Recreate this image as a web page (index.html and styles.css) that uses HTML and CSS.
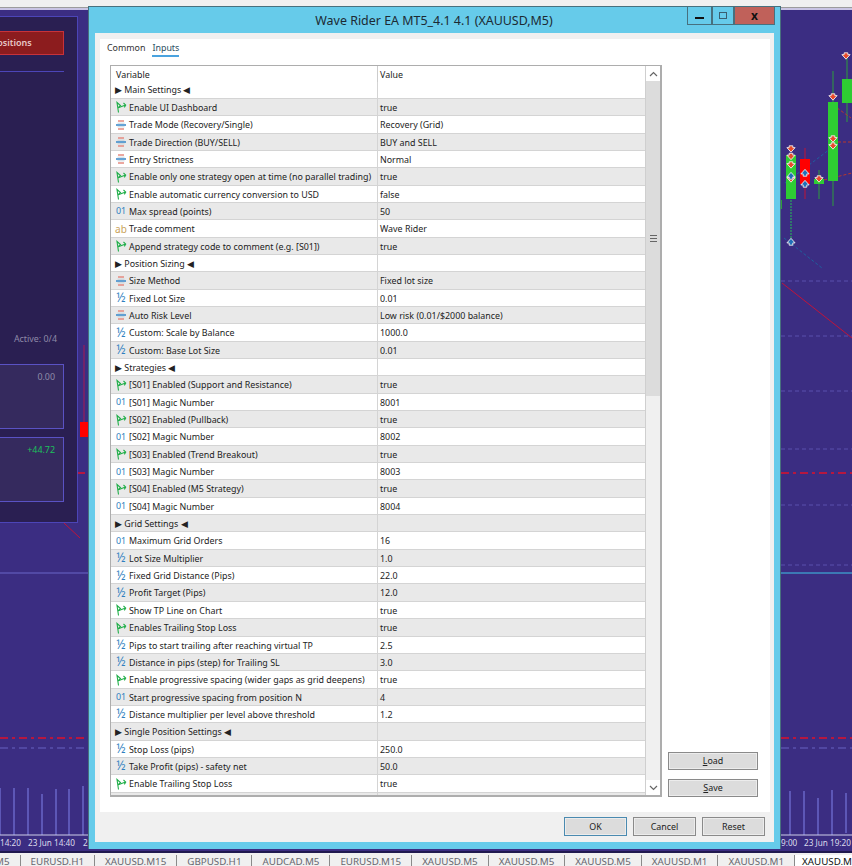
FILE: index.html
```html
<!DOCTYPE html>
<html lang="en">
  <head>
    <meta charset="UTF-8" />
    <meta name="viewport" content="width=device-width, initial-scale=1.0" />
    <title>Wave Rider EA MT5_4.1 4.1 (XAUUSD,M5)</title>
    <link rel="stylesheet" href="styles.css">
  </head>
  <body>
    <div class="hidden">
      <svg width="0" height="0" class="hidden">
        <symbol id="bool" viewBox="0 0 12 12" fill="none" stroke="#1fae48" stroke-width="1.100">
          <path d="M3.500 11.500L2 1.500l3.500 3L2.600 7.500"></path>
          <path d="M4 6.500l6.500-2.500M8.500 2l2.200 2-1.400 2.400"></path>
        </symbol>
        <symbol id="enum" viewBox="0 0 12 12" fill="none" stroke-width="1.600">
          <path d="M3 2h6M3 10h6" stroke="#e58a80"></path>
          <path d="M1 6h10" stroke="#3f8ccb"></path>
          <path d="M2.500 4.200h7M2.500 7.800h7" stroke="#b9c9d6" stroke-width=".8"></path>
        </symbol>
        <symbol id="sell" viewBox="0 0 11 11" stroke="#f4eeee" stroke-width="1" fill="#e8492a" overflow="visible">
          <path d="M3.500 2h4v2h2.500L5.500 9 1 4h2.500z"></path>
        </symbol>
        <symbol id="buy" viewBox="0 0 11 11" stroke="#f4eeee" stroke-width="1" fill="#1f6fb8" overflow="visible">
          <path d="M5.500 1.500L10 6.500H7.500V9h-4V6.500H1z"></path>
        </symbol>
      </svg>
    </div>

    <div class="topbar"></div>

    <main class="chart">
      <svg class="chart-draw" viewBox="0 0 852 845" width="852" height="845">
        <g stroke="#5a50ad" stroke-dasharray="4 3" fill="none">
          <path d="M781 273h71M781 328h71M781 383h71M781 441h71M781 497h71M781 557h71"></path>
        </g>
        <path d="M781 565h71" stroke="#3fc5e6"></path>
        <path d="M0 565h88" stroke="#6a66c8"></path>
        <g stroke="#e0102a" stroke-width="1.500" stroke-dasharray="8 4 3 4" fill="none">
          <path d="M781 465h71M0 730h85M781 730h71"></path>
        </g>
        <g stroke="#5a50ad" stroke-width="1.500" stroke-dasharray="8 4 3 4" fill="none">
          <path d="M0 740h85M781 740h71"></path>
        </g>
        <path d="M782 275L852 330" stroke="#c0143a" fill="none"></path>
        <path d="M64 515L80 530" stroke="#c0143a" fill="none"></path>
        <path d="M84 337v77" stroke="#a81a52"></path>
        <rect x="80" y="414" width="8" height="15" fill="#ff0000"></rect>
        <path d="M78 465h7" stroke="#e0102a" stroke-width="1.500"></path>

        <path d="M791 192v42" stroke="#2e8f64" stroke-dasharray="2 1" stroke-width="1.500"></path>
        <path d="M805 140v51" stroke="#c01436"></path>
        <path d="M819 162v29M833 63v135M847 47v67M781.500 192v9" stroke="#2f9e3c"></path>
        <path d="M784 230l38 30" stroke="#1f5f9e" stroke-dasharray="3 2" fill="none"></path>
        <path d="M785 175l40-30 8-7" stroke="#1f5f9e" stroke-dasharray="3 2" fill="none"></path>
        <path d="M833 97l18 13M838 134h14M824 172l28-7" stroke="#b8382c" stroke-dasharray="3 2" fill="none"></path>
        <rect x="786" y="147" width="10" height="44" fill="#2ecc33"></rect>
        <rect x="800" y="151" width="10" height="25" fill="#ff0000"></rect>
        <rect x="814" y="171" width="10" height="5" fill="#2ecc33"></rect>
        <rect x="828" y="94" width="10" height="79" fill="#2ecc33"></rect>
        <rect x="842" y="71" width="10" height="24" fill="#2ecc33"></rect>

        <use href="#sell" x="786" y="136" width="10" height="10"></use>
        <use href="#sell" x="786" y="143.500" width="10" height="10"></use>
        <use href="#sell" x="786" y="152" width="10" height="10"></use>
        <use href="#sell" x="786" y="166" width="10" height="10"></use>
        <use href="#buy" x="786" y="163" width="10" height="10"></use>
        <use href="#buy" x="786" y="229" width="10" height="10"></use>
        <use href="#sell" x="814" y="166" width="10" height="10"></use>
        <use href="#sell" x="828" y="84" width="10" height="10"></use>
        <use href="#sell" x="828" y="126" width="10" height="10"></use>
        <use href="#sell" x="828" y="133" width="10" height="10"></use>
        <use href="#sell" x="841" y="43" width="10" height="10"></use>
        <use href="#buy" x="800" y="160" width="10" height="10"></use>
        <use href="#buy" x="800" y="171" width="10" height="10"></use>

        <g stroke="#6a66c8" stroke-width="1.500">
          <path d="M0 780v47M14 780v47M28 780v47M42 786v41M56 781v46M69 781v46M83 778v49"></path>
          <path d="M790 783v44M804 783v44M818 790v37M832 782v45M846 785v40"></path>
        </g>
        <path d="M0 827h88M781 827h71" stroke="#cfcfe8"></path>
        <g class="axis-text">
          <text x="0" y="838">14:20</text>
          <text x="28" y="838">23 Jun 14:40</text>
          <text x="83" y="838">2</text>
          <text x="781" y="838">9:00</text>
          <text x="804" y="838">23 Jun 19:20</text>
        </g>
      </svg>

      <aside class="dash">
        <div class="dash-btn">Close All Positions</div>
        <div class="dash-rule"></div>
        <div class="dash-active">Active: 0/4</div>
        <div class="dash-card">0.00</div>
        <div class="dash-card dash-card-pos">+44.72</div>
      </aside>

      <section class="dialog">
        <header class="titlebar">
          <h1 class="title">Wave Rider EA MT5_4.1 4.1 (XAUUSD,M5)</h1>
          <div class="winbtns">
            <div class="winbtn"><span class="glyph-min"></span></div>
            <div class="winbtn winbtn-max"><span class="glyph-max"></span></div>
            <div class="winbtn winbtn-close">x</div>
          </div>
        </header>
        <div class="client">
          <div class="panel">
            <nav class="tabs">
              <span class="tab">Common</span>
              <span class="tab tab-on">Inputs</span>
            </nav>
            <div class="panel-body">
              <div class="table">
                <div class="table-main">
                  <div class="thead"><span>Variable</span><span>Value</span></div>
                  <div class="rows">
                    <div class="row"><span class="cell section">▶ Main Settings ◀</span><span class="val"></span></div>
                    <div class="row"><span class="cell"><svg class="icon"><use href="#bool"></use></svg>Enable UI Dashboard</span><span class="val">true</span></div>
                    <div class="row"><span class="cell"><svg class="icon"><use href="#enum"></use></svg>Trade Mode (Recovery/Single)</span><span class="val">Recovery (Grid)</span></div>
                    <div class="row"><span class="cell"><svg class="icon"><use href="#enum"></use></svg>Trade Direction (BUY/SELL)</span><span class="val">BUY and SELL</span></div>
                    <div class="row"><span class="cell"><svg class="icon"><use href="#enum"></use></svg>Entry Strictness</span><span class="val">Normal</span></div>
                    <div class="row"><span class="cell"><svg class="icon"><use href="#bool"></use></svg>Enable only one strategy open at time (no parallel trading)</span><span class="val">true</span></div>
                    <div class="row"><span class="cell"><svg class="icon"><use href="#bool"></use></svg>Enable automatic currency conversion to USD</span><span class="val">false</span></div>
                    <div class="row"><span class="cell"><i class="ico ico-int">01</i>Max spread (points)</span><span class="val">50</span></div>
                    <div class="row"><span class="cell"><i class="ico ico-str">ab</i>Trade comment</span><span class="val">Wave Rider</span></div>
                    <div class="row"><span class="cell"><svg class="icon"><use href="#bool"></use></svg>Append strategy code to comment (e.g. [S01])</span><span class="val">true</span></div>
                    <div class="row"><span class="cell section">▶ Position Sizing ◀</span><span class="val"></span></div>
                    <div class="row"><span class="cell"><svg class="icon"><use href="#enum"></use></svg>Size Method</span><span class="val">Fixed lot size</span></div>
                    <div class="row"><span class="cell"><i class="ico ico-dbl">½</i>Fixed Lot Size</span><span class="val">0.01</span></div>
                    <div class="row"><span class="cell"><svg class="icon"><use href="#enum"></use></svg>Auto Risk Level</span><span class="val">Low risk (0.01/$2000 balance)</span></div>
                    <div class="row"><span class="cell"><i class="ico ico-dbl">½</i>Custom: Scale by Balance</span><span class="val">1000.0</span></div>
                    <div class="row"><span class="cell"><i class="ico ico-dbl">½</i>Custom: Base Lot Size</span><span class="val">0.01</span></div>
                    <div class="row"><span class="cell section">▶ Strategies ◀</span><span class="val"></span></div>
                    <div class="row"><span class="cell"><svg class="icon"><use href="#bool"></use></svg>[S01] Enabled (Support and Resistance)</span><span class="val">true</span></div>
                    <div class="row"><span class="cell"><i class="ico ico-int">01</i>[S01] Magic Number</span><span class="val">8001</span></div>
                    <div class="row"><span class="cell"><svg class="icon"><use href="#bool"></use></svg>[S02] Enabled (Pullback)</span><span class="val">true</span></div>
                    <div class="row"><span class="cell"><i class="ico ico-int">01</i>[S02] Magic Number</span><span class="val">8002</span></div>
                    <div class="row"><span class="cell"><svg class="icon"><use href="#bool"></use></svg>[S03] Enabled (Trend Breakout)</span><span class="val">true</span></div>
                    <div class="row"><span class="cell"><i class="ico ico-int">01</i>[S03] Magic Number</span><span class="val">8003</span></div>
                    <div class="row"><span class="cell"><svg class="icon"><use href="#bool"></use></svg>[S04] Enabled (M5 Strategy)</span><span class="val">true</span></div>
                    <div class="row"><span class="cell"><i class="ico ico-int">01</i>[S04] Magic Number</span><span class="val">8004</span></div>
                    <div class="row"><span class="cell section">▶ Grid Settings ◀</span><span class="val"></span></div>
                    <div class="row"><span class="cell"><i class="ico ico-int">01</i>Maximum Grid Orders</span><span class="val">16</span></div>
                    <div class="row"><span class="cell"><i class="ico ico-dbl">½</i>Lot Size Multiplier</span><span class="val">1.0</span></div>
                    <div class="row"><span class="cell"><i class="ico ico-dbl">½</i>Fixed Grid Distance (Pips)</span><span class="val">22.0</span></div>
                    <div class="row"><span class="cell"><i class="ico ico-dbl">½</i>Profit Target (Pips)</span><span class="val">12.0</span></div>
                    <div class="row"><span class="cell"><svg class="icon"><use href="#bool"></use></svg>Show TP Line on Chart</span><span class="val">true</span></div>
                    <div class="row"><span class="cell"><svg class="icon"><use href="#bool"></use></svg>Enables Trailing Stop Loss</span><span class="val">true</span></div>
                    <div class="row"><span class="cell"><i class="ico ico-dbl">½</i>Pips to start trailing after reaching virtual TP</span><span class="val">2.5</span></div>
                    <div class="row"><span class="cell"><i class="ico ico-dbl">½</i>Distance in pips (step) for Trailing SL</span><span class="val">3.0</span></div>
                    <div class="row"><span class="cell"><svg class="icon"><use href="#bool"></use></svg>Enable progressive spacing (wider gaps as grid deepens)</span><span class="val">true</span></div>
                    <div class="row"><span class="cell"><i class="ico ico-int">01</i>Start progressive spacing from position N</span><span class="val">4</span></div>
                    <div class="row"><span class="cell"><i class="ico ico-dbl">½</i>Distance multiplier per level above threshold</span><span class="val">1.2</span></div>
                    <div class="row"><span class="cell section">▶ Single Position Settings ◀</span><span class="val"></span></div>
                    <div class="row"><span class="cell"><i class="ico ico-dbl">½</i>Stop Loss (pips)</span><span class="val">250.0</span></div>
                    <div class="row"><span class="cell"><i class="ico ico-dbl">½</i>Take Profit (pips) - safety net</span><span class="val">50.0</span></div>
                    <div class="row"><span class="cell"><svg class="icon"><use href="#bool"></use></svg>Enable Trailing Stop Loss</span><span class="val">true</span></div>
                    <div class="row"><span class="cell"></span><span class="val"></span></div>
                  </div>
                </div>
                <div class="scrollbar">
                  <div class="sb-btn">
                    <svg width="9" height="6" viewBox="0 0 9 6"><path d="M1 5l3.500-3.500L8 5" fill="none" stroke="#666" stroke-width="1.200"></path></svg>
                  </div>
                  <div class="sb-thumb"><span class="sb-grip"></span></div>
                  <div class="sb-track"></div>
                  <div class="sb-btn">
                    <svg width="9" height="6" viewBox="0 0 9 6"><path d="M1 1l3.500 3.500L8 1" fill="none" stroke="#666" stroke-width="1.200"></path></svg>
                  </div>
                </div>
              </div>
              <div class="side-btns">
                <button class="btn btn-side"><u>L</u>oad</button>
                <button class="btn btn-side"><u>S</u>ave</button>
              </div>
            </div>
          </div>
          <footer class="footer">
            <button class="btn btn-foot btn-default">OK</button>
            <button class="btn btn-foot">Cancel</button>
            <button class="btn btn-foot">Reset</button>
          </footer>
          <span class="size-grip"></span>
        </div>
      </section>
    </main>

    <div class="tabstrip">
      <span class="sym sym-first">XAUUSD.M5</span>
      <span class="sym">EURUSD.H1</span>
      <span class="sym">XAUUSD.M15</span>
      <span class="sym">GBPUSD.H1</span>
      <span class="sym">AUDCAD.M5</span>
      <span class="sym">EURUSD.M15</span>
      <span class="sym">XAUUSD.M5</span>
      <span class="sym">XAUUSD.M5</span>
      <span class="sym">XAUUSD.M5</span>
      <span class="sym">XAUUSD.M1</span>
      <span class="sym">XAUUSD.M1</span>
      <span class="sym sym-on">XAUUSD.M5</span>
    </div>
  </body>
</html>
```
FILE: styles.css
```css
*,
*::before,
*::after {
  box-sizing: border-box;
  margin: 0;
  padding: 0;
}

html,
body {
  height: 100%;
  overflow: hidden;
}

body {
  display: flex;
  flex-direction: column;
  background-color: #f0f0f0;
  color: #1c1c1c;
  font-family: "Noto Sans", sans-serif;
  font-size: 8.9px;
}

.hidden {
  display: none;
}

.topbar {
  height: 8px;
  flex: none;
  background: #f0f0f0;
  border-bottom: 1px solid #9c9c9c;
}

.chart {
  position: relative;
  height: 845px;
  flex: none;
  background: #3b2d82;
  border-top: 2px solid #c9c4e4;
  border-bottom: 2px solid #20194f;
}

.chart-draw {
  position: absolute;
  left: 0;
  top: -2px;
}

.axis-text text {
  fill: #dcdcec;
  font-size: 8.200px;
}

/* dashboard on the chart, cut off by the window's left edge */
.dash {
  position: absolute;
  left: -100px;
  top: 6px;
  width: 178px;
  height: 507px;
  padding: 14px 13px 0 0;
  background: #2a1f52;
  border: 1px solid #4c45b8;
  display: flex;
  flex-direction: column;
  align-items: flex-end;
}

.dash-btn {
  width: 154px;
  height: 24px;
  padding-left: 10px;
  background: #8c1c1e;
  border: 1px solid #c8323a;
  color: #e8c8c8;
  font-weight: 600;
  font-size: 9px;
  line-height: 22px;
  white-space: nowrap;
  text-align: center;
}

.dash-rule {
  width: 154px;
  height: 1px;
  margin-top: 16px;
  background: #4c45b8;
}

.dash-active {
  margin: 260px 7px 0 0;
  color: #8e8aa8;
}

.dash-card {
  width: 154px;
  height: 65px;
  margin-top: 19px;
  padding: 5px 8px;
  background: #352a5e;
  border: 1px solid #5a52c4;
  color: #8e8aa8;
  text-align: right;
}

.dash-card-pos {
  margin-top: 8px;
  color: #1cc15c;
}

/* inputs window */
.dialog {
  position: absolute;
  left: 88px;
  top: -4px;
  width: 693px;
  height: 843px;
  display: flex;
  flex-direction: column;
  background: #66cbea;
  border: 1px solid #47707e;
  border-width: 1px 1px 0;
  padding: 0 6px 7px;
}

.titlebar {
  position: relative;
  height: 26px;
  flex: none;
  display: flex;
  justify-content: center;
  align-items: center;
}

.title {
  font-size: 12.450px;
  font-weight: 400;
  color: #1c2a33;
  margin-right: 1px;
}

.winbtns {
  position: absolute;
  right: -1px;
  top: 0;
  display: flex;
}

.winbtn {
  width: 25px;
  height: 18px;
  display: flex;
  align-items: center;
  justify-content: center;
  border: 1px solid #47707e;
  border-top: 0;
}

.winbtn-max {
  width: 22px;
}

.winbtn-close {
  width: 41px;
  background: #c0615a;
  color: #111;
  font-weight: 700;
  font-size: 12px;
  line-height: 14px;
}

.glyph-min {
  width: 9px;
  height: 2px;
  margin-top: 4px;
  background: #111;
}

.glyph-max {
  width: 8px;
  height: 7px;
  border: 1.500px solid #3a5f70;
}

.client {
  position: relative;
  flex: 1;
  min-height: 0;
  display: flex;
  flex-direction: column;
  padding: 6px 4px 0 5px;
  background: #f0f0f0;
}

.size-grip {
  position: absolute;
  right: 1px;
  bottom: 1px;
  width: 6px;
  height: 6px;
  background: radial-gradient(#bdbdbd 40%, transparent 45%) 0 0 / 2px 2px;
}

.panel {
  flex: 1;
  min-height: 0;
  background: #fff;
  display: flex;
  flex-direction: column;
  padding: 0 9px 15px 10px;
}

.tabs {
  height: 26px;
  flex: none;
  display: flex;
  gap: 7px;
}

.tab {
  height: 17px;
  line-height: 15px;
  margin-left: -3px;
  color: #333;
  margin-top: 1px;
}

.tab-on {
  margin-left: 0;
  color: #2a4e62;
  border-bottom: 2px solid #4aa3df;
}

.panel-body {
  flex: 1;
  min-height: 0;
  display: flex;
  gap: 6px;
}

.table {
  width: 552px;
  flex: none;
  display: flex;
  border: 2px solid #adadad;
  border-width: 1px 2px 2px 1px;
  overflow: hidden;
}

.table-main {
  flex: 1;
  min-width: 0;
  overflow: hidden;
}

.thead {
  height: 15.500px;
  display: grid;
  grid-template-columns: 266px 1fr;
  line-height: 18px;
}

.thead span {
  padding-left: 5px;
}

.thead span + span {
  border-left: 1px solid #ccc;
  padding-left: 2px;
}

.row {
  height: 17.350px;
  display: grid;
  grid-template-columns: 266px 1fr;
  align-items: center;
  border-bottom: 1px solid #d4d4d4;
  white-space: nowrap;
}

.row:nth-child(even) {
  background: #e9e9e9;
}

.row .val {
  height: 100%;
  line-height: 17px;
  padding-left: 2px;
  border-left: 1px solid #d4d4d4;
}

.cell {
  display: flex;
  align-items: center;
  height: 16px;
  padding-left: 4px;
  overflow: hidden;
}

.section {
  color: #222;
  white-space: pre;
}

.icon {
  width: 12px;
  height: 12px;
  margin-right: 2px;
  flex: none;
}

.ico {
  width: 12px;
  margin-right: 2px;
  flex: none;
  font-style: normal;
  text-align: center;
  line-height: 14px;
}

.ico-int {
  color: #2f7fc0;
}

.ico-str {
  color: #c9a259;
  font-size: 10px;
}

.ico-dbl {
  color: #2f7fc0;
  font-size: 12px;
}

.scrollbar {
  width: 15px;
  flex: none;
  display: flex;
  flex-direction: column;
  border-left: 1px solid #cfcfcf;
  background: #f0f0f0;
}

.sb-btn {
  height: 15px;
  flex: none;
  display: flex;
  align-items: center;
  justify-content: center;
  background: #fff;
}

.sb-thumb {
  height: 315px;
  flex: none;
  background: #dcdcdc;
  display: flex;
  align-items: center;
  justify-content: center;
}

.sb-grip {
  width: 7px;
  height: 7px;
  border-top: 1px solid #666;
  border-bottom: 1px solid #666;
  background: linear-gradient(#666, #666) center / 100% 1px no-repeat;
}

.sb-track {
  flex: 1;
}

.side-btns {
  align-self: flex-end;
  display: flex;
  flex-direction: column;
  gap: 9px;
}

.btn {
  font: inherit;
  color: #222;
  background: #dcdcdc;
  border: 1px solid #8a8a8a;
  box-shadow: inset 0 0 0 1px #ececec;
  height: 18px;
  line-height: 14px;
}

.btn-side {
  width: 90px;
}

.footer {
  height: 30px;
  flex: none;
  display: flex;
  justify-content: flex-end;
  gap: 6px;
  padding: 5px 5px 0 0;
}

.btn-foot {
  width: 63px;
  height: 19px;
}

.btn-default {
  border-color: #4a8ab0;
}

.tabstrip {
  flex: 1;
  display: flex;
  overflow: hidden;
  background: #f0f0f0;
  color: #66666e;
  font-size: 9.800px;
  line-height: 13px;
  white-space: nowrap;
  padding-top: 2px;
}

.sym {
  flex: none;
  padding: 0 10px;
  height: 100%;
  border-right: 1px solid #8a8a8a;
}

.sym-first {
  margin-left: -56px;
}

.sym-on {
  border: 0;
  background: #fff;
  color: #111;
  padding-left: 7px;
}
```
